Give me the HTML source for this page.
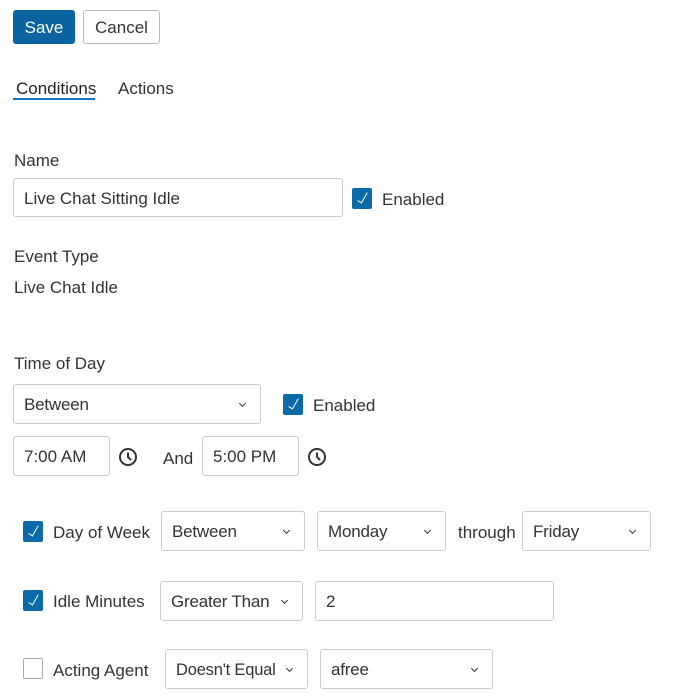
<!DOCTYPE html>
<html><head><style>
*{box-sizing:border-box;margin:0;padding:0}
body{width:700px;height:700px;background:#fff;font-family:"Liberation Sans",Arial,sans-serif;font-size:17px;color:#333;position:relative;overflow:hidden}
.a{position:absolute}
.t{position:absolute;line-height:20px;white-space:nowrap}
.box{position:absolute;border:1px solid #ccc;border-radius:3px;background:#fff;padding-left:10px;padding-top:2px;display:flex;align-items:center;color:#333;white-space:nowrap}
.sel{letter-spacing:-0.2px}
.sel::after{content:"";position:absolute;right:15px;top:50%;width:4px;height:4px;border-right:1.6px solid #333;border-bottom:1.6px solid #333;transform:translateY(-60%) rotate(45deg)}
.cb{position:absolute;width:20px;height:21px;border-radius:2px;background:#0b6aa8}
.cb::after{content:"";position:absolute;left:8px;top:3px;width:4px;height:11px;border-right:1.5px solid #fff;border-bottom:1.5px solid #fff;transform:rotate(30deg)}
.cbe{position:absolute;width:20px;height:21px;border-radius:2px;border:1px solid #aaa;background:#fff}
.clk{position:absolute;width:20px;height:20px}
</style></head><body>
<div class="a" style="left:13px;top:10px;width:62px;height:34px;background:#0b64a0;border-radius:3px;color:#fff;text-align:center;line-height:35px">Save</div>
<div class="a" style="left:83px;top:10px;width:77px;height:34px;border:1px solid #bbb;border-radius:3px;text-align:center;line-height:33px">Cancel</div>
<div class="t" style="left:16px;top:79px;color:#222">Conditions</div>
<div class="a" style="left:13px;top:98px;width:82px;height:2px;background:#1a73c0"></div>
<div class="t" style="left:118px;top:79px">Actions</div>
<div class="t" style="left:14px;top:151px">Name</div>
<div class="box" style="left:13px;top:178px;width:330px;height:39px">Live Chat Sitting Idle</div>
<div class="cb" style="left:352px;top:188px"></div>
<div class="t" style="left:382px;top:190px">Enabled</div>
<div class="t" style="left:14px;top:247px">Event Type</div>
<div class="t" style="left:14px;top:278px">Live Chat Idle</div>
<div class="t" style="left:14px;top:354px">Time of Day</div>
<div class="box sel" style="left:13px;top:384px;width:248px;height:40px">Between</div>
<div class="cb" style="left:283px;top:394px"></div>
<div class="t" style="left:313px;top:396px">Enabled</div>
<div class="box" style="left:13px;top:436px;width:97px;height:40px">7:00 AM</div>
<svg class="clk" style="left:118px;top:447px" viewBox="0 0 20 20"><circle cx="10" cy="10" r="8" fill="none" stroke="#333" stroke-width="2"/><path d="M10 5.5V10l3 3" fill="none" stroke="#333" stroke-width="2"/></svg>
<div class="t" style="left:163px;top:449px">And</div>
<div class="box" style="left:202px;top:436px;width:97px;height:40px">5:00 PM</div>
<svg class="clk" style="left:307px;top:447px" viewBox="0 0 20 20"><circle cx="10" cy="10" r="8" fill="none" stroke="#333" stroke-width="2"/><path d="M10 5.5V10l3 3" fill="none" stroke="#333" stroke-width="2"/></svg>
<div class="cb" style="left:23px;top:521px"></div>
<div class="t" style="left:53px;top:523px">Day of Week</div>
<div class="box sel" style="left:161px;top:511px;width:144px;height:40px">Between</div>
<div class="box sel" style="left:317px;top:511px;width:129px;height:40px">Monday</div>
<div class="t" style="left:458px;top:523px">through</div>
<div class="box sel" style="left:522px;top:511px;width:129px;height:40px">Friday</div>
<div class="cb" style="left:23px;top:590px"></div>
<div class="t" style="left:53px;top:592px">Idle Minutes</div>
<div class="box sel" style="left:160px;top:581px;width:143px;height:40px">Greater Than</div>
<div class="box" style="left:315px;top:581px;width:239px;height:40px">2</div>
<div class="cbe" style="left:23px;top:658px"></div>
<div class="t" style="left:53px;top:661px">Acting Agent</div>
<div class="box sel" style="left:165px;top:649px;width:143px;height:40px;font-size:16.5px">Doesn't Equal</div>
<div class="box sel" style="left:320px;top:649px;width:173px;height:40px">afree</div>
</body></html>
